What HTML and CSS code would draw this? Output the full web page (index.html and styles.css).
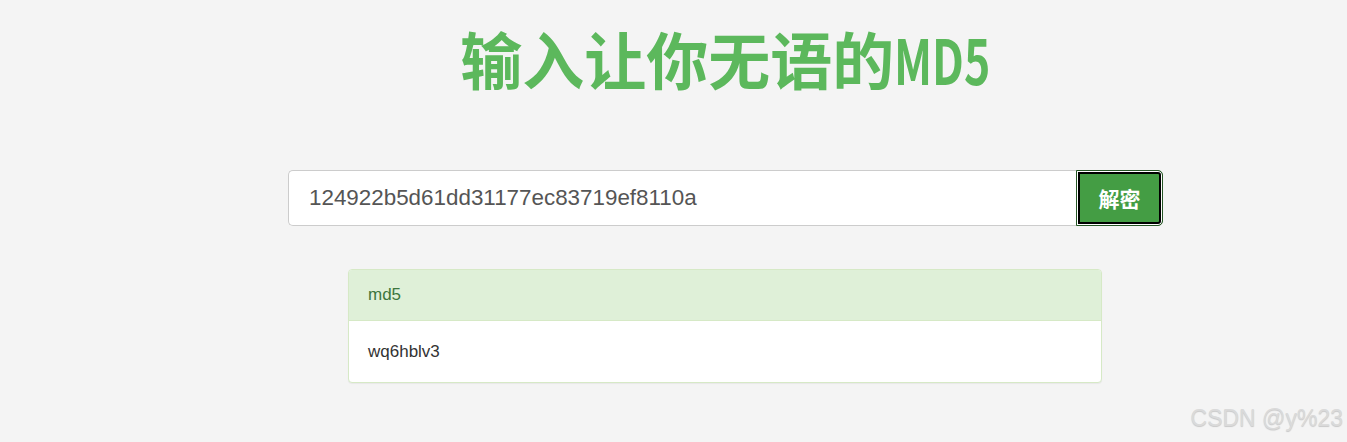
FILE: index.html
```html
<!DOCTYPE html>
<html lang="zh">
<head>
<meta charset="utf-8">
<title>MD5</title>
<link rel="stylesheet" href="styles.css">
</head>
<body>
<div class="main">
  <h1 class="title">输入让你无语的<span class="md5">MD5</span></h1>
  <form class="search">
    <input class="search-input" type="text" value="124922b5d61dd31177ec83719ef8110a">
    <button class="search-btn" type="button">解密</button>
  </form>
  <div class="panel">
    <div class="panel-heading">md5</div>
    <div class="panel-body">wq6hblv3</div>
  </div>
</div>
<div class="watermark">CSDN @y%23</div>
</body>
</html>
```

FILE: styles.css
```css
html, body {
  margin: 0;
  padding: 0;
}
body {
  background: #f4f4f4;
  height: 442px;
  overflow: hidden;
  font-family: "Liberation Sans", Arial, "Noto Sans CJK SC", sans-serif;
}
.main {
  width: 875px;
  margin-left: 288px;
}
.title {
  margin: 27px 0 0 0;
  height: 62px;
  line-height: 62px;
  font-size: 62px;
  font-weight: 700;
  color: #5cb85c;
  text-align: center;
  font-family: "Noto Sans CJK SC", sans-serif;
  white-space: nowrap;
}
.md5 {
  display: inline-block;
  transform: scaleX(0.72);
  transform-origin: left center;
  margin-right: -37px;
}
.search {
  display: flex;
  margin: 81px 0 0 0;
  height: 56px;
}
.search-input {
  flex: 1;
  box-sizing: border-box;
  height: 56px;
  margin: 0;
  border: 1px solid #ccc;
  border-right: 0;
  border-radius: 5px 0 0 5px;
  padding: 0 0 0 20px;
  font-family: "Liberation Sans", Arial, sans-serif;
  font-size: 22.4px;
  color: #555;
  background: #fff;
  outline: none;
}
.search-btn {
  box-sizing: border-box;
  width: 87px;
  height: 56px;
  margin: 0;
  border: 1px solid #255625;
  border-radius: 0 5px 5px 0;
  background: #449d44;
  box-shadow: inset 0 0 0 1px #fff, inset 0 0 0 3px #000;
  color: #fff;
  font-family: "Noto Sans CJK SC", sans-serif;
  font-weight: 700;
  font-size: 21px;
  padding: 0;
}
.panel {
  margin: 43px 0 0 60px;
  width: 754px;
  box-sizing: border-box;
  border: 1px solid #d6e9c6;
  border-radius: 4px;
  background: #fff;
  box-shadow: 0 1px 1px rgba(0, 0, 0, 0.05);
  font-size: 17px;
}
.panel-heading {
  height: 50px;
  line-height: 50px;
  padding: 0 19px;
  background: #dff0d8;
  color: #3c763d;
  border-bottom: 1px solid #d6e9c6;
  border-radius: 3px 3px 0 0;
}
.panel-body {
  height: 61px;
  line-height: 61px;
  padding: 0 19px;
  color: #333;
}
.watermark {
  position: absolute;
  right: 4px;
  top: 405px;
  font-size: 23px;
  color: #dadada;
  text-shadow: 0 1px 1px rgba(0, 0, 0, 0.18);
  white-space: nowrap;
}
```
